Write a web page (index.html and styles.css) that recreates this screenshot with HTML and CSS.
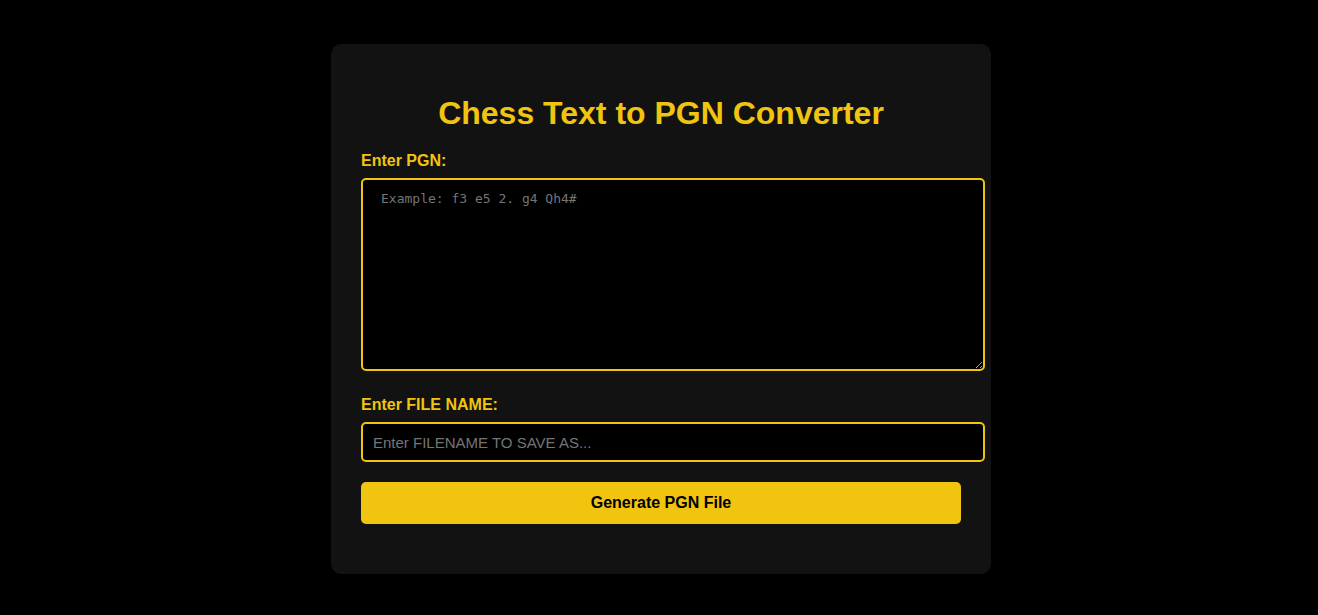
FILE: index.html
```html
<!DOCTYPE html>
<html>
<head>
<meta charset="utf-8">
<link rel="stylesheet" href="styles.css">
</head>
<body>
<div class="card">
  <h1 class="title">Chess Text to PGN Converter</h1>
  <label class="label label-pgn" for="pgn">Enter PGN:</label>
  <textarea id="pgn" class="pgn-input" placeholder="Example: f3 e5 2. g4 Qh4#"></textarea>
  <label class="label label-file" for="fname">Enter FILE NAME:</label>
  <input id="fname" class="file-input" type="text" placeholder="Enter FILENAME TO SAVE AS...">
  <button class="generate-btn">Generate PGN File</button>
</div>
</body>
</html>
```
FILE: styles.css
```css
html, body {
  margin: 0;
  padding: 0;
  background: #000;
  font-family: "Liberation Sans", Arial, sans-serif;
}
body {
  padding-top: 44px;
  padding-left: 4px;
}
.card {
  width: 600px;
  margin: 0 auto;
  padding: 30px 30px 50px;
  background: #121212;
  border-radius: 10px;
  display: flex;
  flex-direction: column;
  align-items: flex-start;
}
.title {
  align-self: stretch;
  text-align: center;
  color: #f1c40f;
  font-size: 32px;
  line-height: 37px;
  font-weight: bold;
  margin: 21px 0 0;
}
.label {
  display: block;
  color: #f1c40f;
  font-size: 16px;
  font-weight: bold;
  line-height: 18px;
}
.label-pgn {
  margin-top: 20px;
}
.label-file {
  margin-top: 25px;
}
.pgn-input {
  box-sizing: border-box;
  width: 624px;
  height: 193px;
  margin-top: 8px;
  padding: 11px 18px;
  background: #000;
  color: #ddd;
  border: 2px solid #f1c40f;
  border-radius: 5px;
  font-family: "DejaVu Sans Mono", monospace;
  font-size: 13px;
  outline: none;
  resize: both;
}
.pgn-input::placeholder {
  color: #757575;
}
.file-input {
  box-sizing: border-box;
  width: 624px;
  height: 40px;
  margin-top: 8px;
  padding: 0 10px;
  background: #000;
  color: #ddd;
  border: 2px solid #f1c40f;
  border-radius: 5px;
  font-family: "Liberation Sans", Arial, sans-serif;
  font-size: 15px;
  outline: none;
}
.file-input::placeholder {
  color: #757575;
}
.generate-btn {
  width: 600px;
  height: 42px;
  margin-top: 20px;
  background: #f1c40f;
  color: #000;
  border: none;
  border-radius: 5px;
  font-family: "Liberation Sans", Arial, sans-serif;
  font-size: 16px;
  font-weight: bold;
  cursor: pointer;
}
```
